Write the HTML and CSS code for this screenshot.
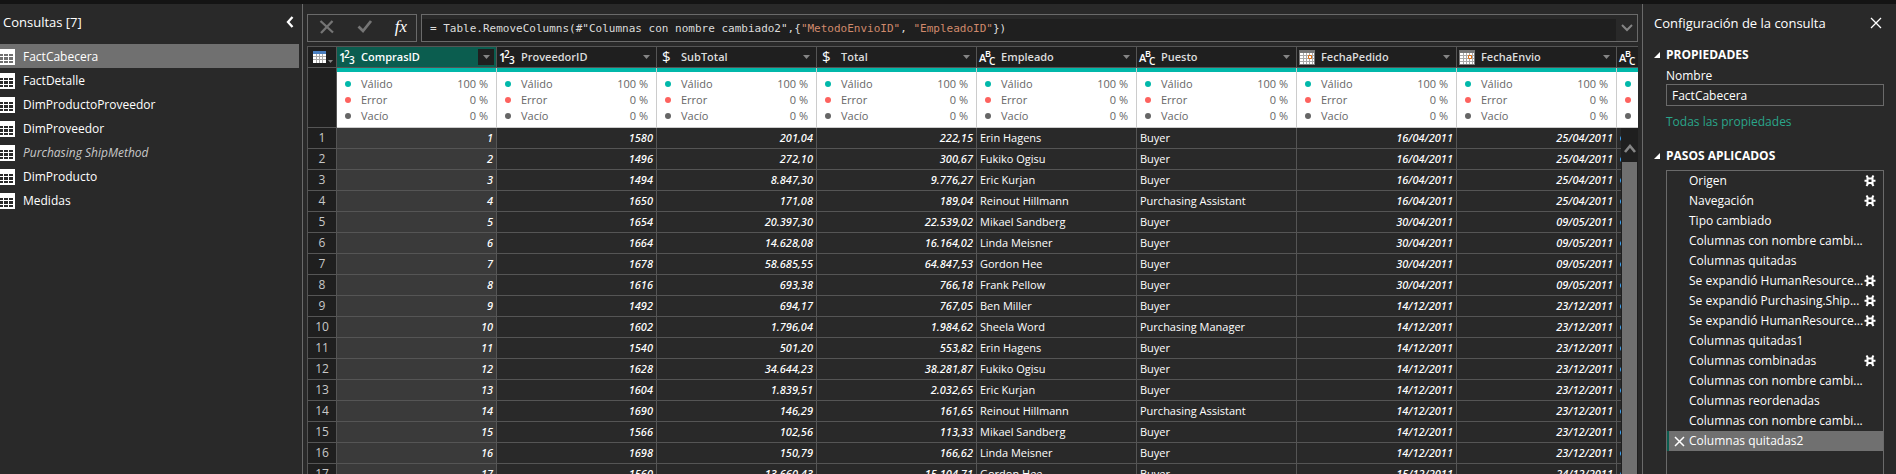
FILE: index.html
```html
<!DOCTYPE html>
<html lang="es">
<head>
<meta charset="utf-8">
<title>Editor de Power Query</title>
<link rel="stylesheet" href="styles.css">
</head>
<body>
<svg class="defs" width="0" height="0" aria-hidden="true">
  <symbol id="table" viewBox="0 0 16 16"><path d="M0 0h16v16H0zM1 5v2h3V5zM5 5v2h4V5zM10 5v2h4V5zM1 8v3h3V8zM5 8v3h4V8zM10 8v3h4V8zM1 12v2h3v-2zM5 12v2h4v-2zM10 12v2h4v-2z" fill="#fff" fill-rule="evenodd"/></symbol>
  <symbol id="gear" viewBox="0 0 12 12"><path d="M3.500 3.500h5v4.500h-5z" fill="none" stroke="#fff" stroke-width="2"/><path d="M2.500.5 4 3M9.500.5 8 3M2.500 11 4 8.500M9.500 11 8 8.500M.5 5.800h3M8.500 5.800h3" stroke="#fff" stroke-width="2"/></symbol>
  <symbol id="date" viewBox="0 0 16 15"><path d="M0 0h16v15H0z" fill="#777"/><path d="M1 3h14v11H1z" fill="#fff"/><path d="M4.500 3v11M7.500 3v11M10.500 3v11M13.500 3v11M1 5.500h14M1 8.500h14M1 11.500h14" stroke="#aaa"/><path d="M9.500 5.500h3v3h-3z" fill="#fff" stroke="#d8701a"/></symbol>
  <symbol id="drop" viewBox="0 0 7 4"><path d="M0 0h7L3.500 4z" fill="#858585"/></symbol>
</svg>
<div class="app">
  <nav class="queries" aria-label="Consultas">
    <header class="queries-head"><h2>Consultas [7]</h2><button class="plain" aria-label="Contraer"><svg width="8" height="12" viewBox="0 0 8 12"><path d="M6.500 1 2 6l4.500 5" fill="none" stroke="#fff" stroke-width="2.300"/></svg></button></header>
    <ul class="query-list" id="queries"></ul>
  </nav>
  <main class="work">
    <div class="formula">
      <div class="tools">
        <button class="plain" aria-label="Cancelar"><svg width="16" height="16" viewBox="0 0 16 16"><path d="M1.500 2 14 13.500M13.500 2 2 14" fill="none" stroke="#757575" stroke-width="2.300"/></svg></button>
        <button class="plain" aria-label="Aceptar"><svg width="16" height="16" viewBox="0 0 16 16"><path d="m1.500 7.500 4.500 4.500L14 2" fill="none" stroke="#757575" stroke-width="2.800"/></svg></button>
        <button class="plain fx" aria-label="Agregar paso">fx</button>
      </div>
      <div class="expr">
        <code>= Table.RemoveColumns(#"Columnas con nombre cambiado2",{<span>"MetodoEnvioID"</span>, <span>"EmpleadoID"</span>})</code>
        <button class="plain" aria-label="Expandir"><svg width="12" height="8" viewBox="0 0 12 8"><path d="m1 1 5 5 5-5" fill="none" stroke="#858585" stroke-width="2"/></svg></button>
      </div>
    </div>
    <div class="grid">
      <table><thead id="head"></thead><tbody id="rows"></tbody></table>
      <div class="scroll"><svg width="12" height="10" viewBox="0 0 12 10"><path d="m1 8 5-6 5 6" fill="none" stroke="#858585" stroke-width="2.600"/></svg><div class="thumb"></div></div>
    </div>
  </main>
  <aside class="settings">
    <header><h2>Configuración de la consulta</h2><button class="plain" aria-label="Cerrar"><svg width="12" height="12" viewBox="0 0 12 12"><path d="m1 1 10 10M11 1 1 11" stroke="#fff" stroke-width="1.300"/></svg></button></header>
    <h3><svg width="6" height="6" viewBox="0 0 6 6"><path d="M6 0v6H0z" fill="#fff"/></svg>PROPIEDADES</h3>
    <div class="props">
      <label for="name">Nombre</label>
      <input id="name" value="FactCabecera">
      <a href="#">Todas las propiedades</a>
    </div>
    <h3><svg width="6" height="6" viewBox="0 0 6 6"><path d="M6 0v6H0z" fill="#fff"/></svg>PASOS APLICADOS</h3>
    <ul class="steps" id="steps"></ul>
  </aside>
</div>
<script src="app.js"></script>
</body>
</html>
```
FILE: styles.css
```css
* { box-sizing: border-box; }
body { margin: 0; background: #292929; color: #fff; font: 12px/20px "Open Sans", "Noto Sans", sans-serif; }
h2, h3, ul { margin: 0; padding: 0; font-weight: 400; }
ul { list-style: none; }
svg { display: block; flex: none; }
.defs { position: absolute; }
.plain { display: flex; align-items: center; justify-content: center; padding: 0; border: 0; background: none; color: inherit; }
.app { display: grid; grid-template-columns: 303px minmax(0, 1fr) 254px; height: 100vh; border-top: 4px solid #141414; overflow: hidden; }

.queries { border-right: 1px solid #6a6a6a; padding-right: 3px; }
.queries-head { display: flex; align-items: center; justify-content: space-between; height: 40px; padding: 0 5px 4px 3px; }
h2 { font-size: 13px; }
.query-list li { display: flex; align-items: center; height: 24px; gap: 8px; padding-top: 1px; margin-left: -1px; }
.query-list .selected { background: #707070; }
.query-list .unloaded { color: #c8c8c8; font-style: italic; }

.work { display: flex; flex-direction: column; gap: 4px; min-width: 0; padding: 10px 4px 0; }
.formula { display: flex; gap: 4px; height: 28px; }
.tools { display: flex; align-items: center; gap: 22px; width: 110px; padding: 0 11px 2px; border: 1px solid #6a6a6a; }
.fx { width: 12px; font: italic 17px/20px "Liberation Serif", serif; }
.expr { display: flex; flex: 1; border: 1px solid #6a6a6a; }
.expr code { flex: 1; margin-top: 4px; padding-left: 8px; background: #1f1f1f; color: #dcdcdc; font: 11px/20px "DejaVu Sans Mono", monospace; white-space: pre; }
.expr code span { color: #d08a6c; }
.expr button { width: 21px; }

.grid { position: relative; flex: 1; min-height: 0; overflow: hidden; }
table { width: 1470px; table-layout: fixed; border-collapse: separate; border-spacing: 0; border-top: 1px solid #555; border-left: 1px solid #555; font-size: 11px; }
th, td { padding: 0; overflow: hidden; white-space: nowrap; border-right: 1px solid #555; border-bottom: 1px solid #555; }
.corner, .col { height: 21px; background: #1f1f1f; }
.corner { width: 29px; }
.corner button { gap: 2px; padding-left: 5px; }
.corner svg:last-child { margin-top: 8px; }
.head { display: flex; align-items: center; height: 20px; padding: 0 2px; color: #dcdcdc; }
.head text { font-family: "Open Sans", sans-serif; font-weight: 600; fill: #fff; }
.head .money { font-weight: 400; }
.name { flex: 1; margin-left: 6px; text-align: left; font-weight: 600; font-size: 11px; }
.active .head { background: #0b5d4f; color: #fff; }
.drop { width: 16px; height: 16px; }
.active .drop { background: #1f1f1f; }
.q { height: 60px; padding: 0; vertical-align: top; background: #fff; color: #666; border-color: #ccc; font-weight: 400; }
.q ul { border-top: 4px solid #01b8aa; padding: 4px 8px 0; }
.q li { display: flex; align-items: center; height: 16px; }
.q i { flex: none; width: 6px; height: 6px; margin-right: 10px; border-radius: 50%; background: #01b8aa; }
.q li:nth-child(2) i { background: #fd625e; }
.q li:nth-child(3) i { background: #666; }
.q b { margin-left: auto; font-weight: 400; }
.blank, .n { background: #1f1f1f; text-align: center; color: #c8c8c8; font-size: 12px; font-weight: 400; }
tbody td, .n { height: 21px; line-height: 20px; }
td { padding: 0 3px; }
td.num { text-align: right; font-family: "Noto Sans", sans-serif; font-style: italic; font-weight: 500; }
td.sel { background: #3a3a3a; }
td.link i { display: block; width: 6px; height: 5px; border-radius: 2px; background: #3aa0f0; }
.scroll { position: absolute; top: 82px; right: 0; bottom: 0; display: flex; flex-direction: column; align-items: center; width: 17px; padding-top: 16px; background: #1f1f1f; }
.thumb { flex: 1; width: 15px; margin-top: 8px; background: #707070; }

.settings { display: flex; flex-direction: column; border-left: 1px solid #6a6a6a; padding: 0 12px 0 11px; }
.settings header { display: flex; align-items: center; justify-content: space-between; height: 37px; padding-right: 2px; }
h3 { display: flex; align-items: center; gap: 6px; height: 28px; font-size: 12px; font-weight: 700; }
.props { display: flex; flex-direction: column; margin: 0 0 10px 12px; }
.props label { line-height: 14px; margin-bottom: 1px; }
.props input { height: 22px; padding: 0 5px; border: 1px solid #6a6a6a; background: #292929; color: #fff; font: inherit; }
.props a { margin-top: 6px; color: #2aa58a; text-decoration: none; }
.steps { flex: 1; margin-left: 12px; border: 1px solid #6a6a6a; border-bottom: 0; }
.steps li { display: flex; align-items: center; height: 20px; padding: 0 7px 0 22px; }
.steps span { white-space: nowrap; }
.steps button { margin-left: auto; }
.steps .selected { border-left: 2px solid #0b5d4f; padding-left: 5px; background: #707070; }
.steps .selected button { margin: 0 4px 0 0; }
```
FILE: app.js
```js
const icon = (id, w, h) => `<svg width="${w}" height="${h}"><use href="#${id}"/></svg>`;

const queries = ['FactCabecera', 'FactDetalle', 'DimProductoProveedor', 'DimProveedor', 'Purchasing ShipMethod', 'DimProducto', 'Medidas'];
document.getElementById('queries').innerHTML = queries.map((q, i) =>
  `<li class="${i === 0 ? 'selected' : i === 4 ? 'unloaded' : ''}">${icon('table', 16, 16)}${q}</li>`).join('');

const glyph = parts => '<svg width="16" height="20" viewBox="0 0 16 20" overflow="visible">' +
  parts.map(([t, x, y, s]) => `<text class="${t === '$' ? 'money' : ''}" x="${x}" y="${y}" font-size="${s}">${t}</text>`).join('') + '</svg>';
const types = {
  int: glyph([['1', 0, 15, 12], ['2', 5, 11, 10], ['3', 10, 17, 10]]),
  money: glyph([['$', 3, 15, 15]]),
  text: glyph([['A', 0, 15, 11], ['B', 6, 10, 9], ['C', 10, 18, 10]]),
  date: icon('date', 16, 15)
};
const cols = [['ComprasID', 'int'], ['ProveedorID', 'int'], ['SubTotal', 'money'], ['Total', 'money'], ['Empleado', 'text'], ['Puesto', 'text'], ['FechaPedido', 'date'], ['FechaEnvio', 'date'], ['', 'text']];
const quality = '<ul><li><i></i>Válido<b>100 %</b></li><li><i></i>Error<b>0 %</b></li><li><i></i>Vacío<b>0 %</b></li></ul>';
document.getElementById('head').innerHTML =
  `<tr><th class="corner"><button class="plain" aria-label="Tabla"><svg width="13" height="12" viewBox="0 0 13 12"><path d="M0 0h13v12H0z" fill="#fff"/><path d="M0 0h13v3H0z" fill="#4a7fc0"/><path d="M3.500 3v9M6.500 3v9M9.500 3v9M0 5.500h13M0 8.500h13" stroke="#aaa"/></svg>${icon('drop', 5, 3)}</button></th>` +
  cols.map(([n, t], i) => `<th class="col ${i ? '' : 'active'}"><div class="head">${types[t]}<span class="name">${n}</span><button class="plain drop" aria-label="Filtrar ${n}">${icon('drop', 7, 4)}</button></div></th>`).join('') +
  '</tr><tr><th class="blank"></th>' + cols.map(() => `<th class="q">${quality}</th>`).join('') + '</tr>';

const data = `1580|201,04|222,15|Erin Hagens|Buyer|16/04/2011|25/04/2011
1496|272,10|300,67|Fukiko Ogisu|Buyer|16/04/2011|25/04/2011
1494|8.847,30|9.776,27|Eric Kurjan|Buyer|16/04/2011|25/04/2011
1650|171,08|189,04|Reinout Hillmann|Purchasing Assistant|16/04/2011|25/04/2011
1654|20.397,30|22.539,02|Mikael Sandberg|Buyer|30/04/2011|09/05/2011
1664|14.628,08|16.164,02|Linda Meisner|Buyer|30/04/2011|09/05/2011
1678|58.685,55|64.847,53|Gordon Hee|Buyer|30/04/2011|09/05/2011
1616|693,38|766,18|Frank Pellow|Buyer|30/04/2011|09/05/2011
1492|694,17|767,05|Ben Miller|Buyer|14/12/2011|23/12/2011
1602|1.796,04|1.984,62|Sheela Word|Purchasing Manager|14/12/2011|23/12/2011
1540|501,20|553,82|Erin Hagens|Buyer|14/12/2011|23/12/2011
1628|34.644,23|38.281,87|Fukiko Ogisu|Buyer|14/12/2011|23/12/2011
1604|1.839,51|2.032,65|Eric Kurjan|Buyer|14/12/2011|23/12/2011
1690|146,29|161,65|Reinout Hillmann|Purchasing Assistant|14/12/2011|23/12/2011
1566|102,56|113,33|Mikael Sandberg|Buyer|14/12/2011|23/12/2011
1698|150,79|166,62|Linda Meisner|Buyer|14/12/2011|23/12/2011
1560|13.660,43|15.104,71|Gordon Hee|Buyer|15/12/2011|24/12/2011`.split('\n').map(r => r.split('|'));
document.getElementById('rows').innerHTML = data.map((r, i) =>
  `<tr><th class="n">${i + 1}</th><td class="num sel">${i + 1}</td>` +
  r.map((v, c) => `<td class="${c === 3 || c === 4 ? '' : 'num'}">${v}</td>`).join('') + '<td class="link"><i></i></td></tr>').join('');

const steps = ['Origen*', 'Navegación*', 'Tipo cambiado', 'Columnas con nombre cambi...', 'Columnas quitadas', 'Se expandió HumanResource...*', 'Se expandió Purchasing.Ship...*', 'Se expandió HumanResource...*', 'Columnas quitadas1', 'Columnas combinadas*', 'Columnas con nombre cambi...', 'Columnas reordenadas', 'Columnas con nombre cambi...'];
document.getElementById('steps').innerHTML = steps.map(s =>
  `<li><span>${s.replace('*', '')}</span>${s.endsWith('*') ? `<button class="plain" aria-label="Configurar">${icon('gear', 12, 12)}</button>` : ''}</li>`).join('') +
  '<li class="selected"><button class="plain" aria-label="Eliminar"><svg width="11" height="11" viewBox="0 0 11 11"><path d="m1 1 9 9M10 1 1 10" stroke="#fff" stroke-width="1.500"/></svg></button><span>Columnas quitadas2</span></li>';
```
